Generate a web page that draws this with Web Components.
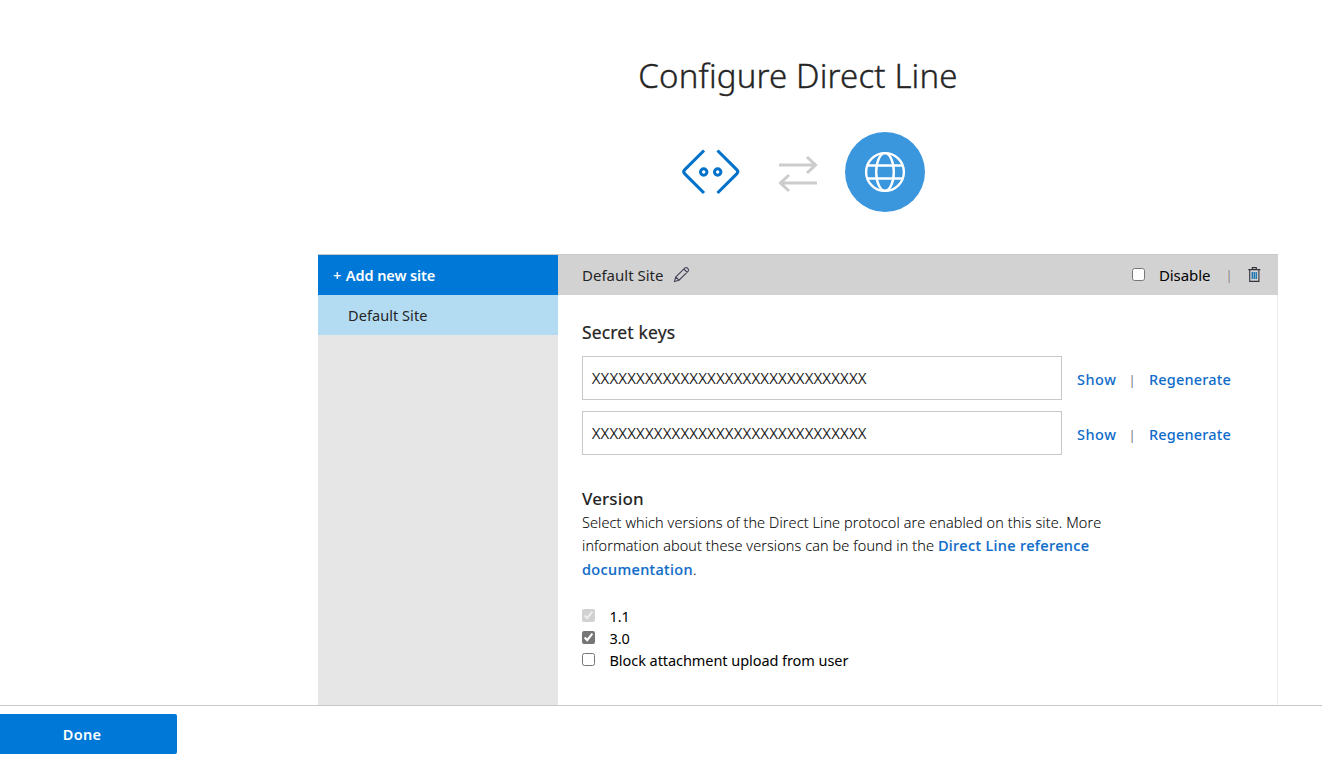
<!DOCTYPE html>
<html lang="en"><head><meta charset="utf-8"><title>Configure Direct Line</title>
<style>html,body{margin:0;height:100%;overflow:hidden;background:#fff}body{font-family:"Noto Sans","Open Sans",sans-serif;color:#252525}</style></head>
<body>
<channel-page>
  <page-header slot="header">Configure Direct Line</page-header>
  <site-list slot="content"><site-item slot="items">Default Site</site-item></site-list>
  <site-editor slot="content" name="Default Site">
    <secret-key value="XXXXXXXXXXXXXXXXXXXXXXXXXXXXXXX"></secret-key>
    <secret-key value="XXXXXXXXXXXXXXXXXXXXXXXXXXXXXXX"></secret-key>
    <version-section slot="versions">
      <check-option checked disabled>1.1</check-option>
      <check-option checked>3.0</check-option>
      <check-option>Block attachment upload from user</check-option>
    </version-section>
  </site-editor>
  <action-bar slot="footer">Done</action-bar>
</channel-page>
<script>
const define=(name,html,setup)=>customElements.define(name,class extends HTMLElement{
  constructor(){super();this.attachShadow({mode:'open'}).innerHTML=html;}
  connectedCallback(){if(setup)setup(this,this.shadowRoot);}
});

define('channel-page',`<style>
:host{display:flex;flex-direction:column;height:100vh;box-sizing:border-box}
.scroll{flex:1;overflow:hidden}
.panel{display:grid;grid-template-columns:240px 720px;width:960px;height:600px;margin-left:318px;border-top:1px solid #c8c8c8;box-sizing:border-box}
</style><div class="scroll"><slot name="header"></slot><div class="panel"><slot name="content"></slot></div></div><slot name="footer"></slot>`);

define('page-header',`<style>
:host{display:block;width:960px;height:254px;margin-left:318px;box-sizing:border-box;padding-top:51px}
h1{margin:0;text-align:center;font:300 33px/50px "Noto Sans",sans-serif;letter-spacing:.160px;color:#252525;-webkit-text-stroke:.35px #252525}
.icons{display:flex;align-items:center;margin:31px 0 0 364px;height:80px}
svg{display:block}.swap{margin:3px 27px 0 38px}
</style><h1><slot></slot></h1><div class="icons">
<svg width="58" height="46" viewBox="0 0 58 46" fill="none" stroke="#0072c9" stroke-width="3.1"><path d="M22 1.500 2.800 20.700q-2.100 2.100 0 4.200L22 44M35.500 1.500 54.700 20.700q2.100 2.100 0 4.200L35.500 44"/><circle cx="21.700" cy="23" r="3.200" stroke-width="3"/><circle cx="35.700" cy="23" r="3.200" stroke-width="3"/></svg>
<svg class="swap" width="40" height="38" viewBox="0 0 40 38" fill="none" stroke="#ccc" stroke-width="3"><path d="M1 10H37M29 2l8.500 8L29 18M39 28H3M11 20l-8.500 8 8.500 8"/></svg>
<svg width="80" height="80" viewBox="0 0 80 80" fill="none" stroke="#fff" stroke-width="2.400"><circle cx="40" cy="40" r="40" fill="#3a96dd" stroke="none"/><circle cx="40" cy="40" r="18.900"/><ellipse cx="40" cy="40" rx="8.800" ry="18.900"/><path d="M22.500 33.500h35M22.500 46.500h35"/></svg>
</div>`);

define('site-list',`<style>
:host{display:block;background:#e6e6e6}
button{display:block;width:240px;height:40px;padding:0 0 0 15px;border:0;background:#0078d7;color:#fff;text-align:left;font:600 14.500px/40px "Noto Sans",sans-serif;letter-spacing:-.100px}
span{font-weight:500;margin-right:1px}
</style><button><span>+</span> Add new site</button><slot name="items"></slot>`);

define('site-item',`<style>:host{display:block;height:40px;padding-left:30px;background:#b3dbf2;color:#252525;font:400 14.500px/40px "Noto Sans",sans-serif;letter-spacing:.060px}</style><slot></slot>`);

define('site-editor',`<style>
:host{display:block;box-sizing:border-box;font-family:"Noto Sans",sans-serif}
header{display:flex;align-items:center;height:40px;padding:0 16px 0 24px;background:#d2d2d2;font-size:15px;line-height:40px}
.name{width:82px;white-space:nowrap}
.pencil{margin:0 auto 0 9px}
input{width:13px;height:13px;margin:0 14px 2px 0}
.disable{width:51px;letter-spacing:-.1px;color:#000;white-space:nowrap}
.bar{width:4px;margin:0 17px 0 17px;font-size:13px;color:#8d8888;display:flex;justify-content:center}
svg{display:block}
.body{padding:25px 0 0 24px;height:600px;box-sizing:border-box;border-right:1px solid #ececec}
h2{margin:0 0 12px;font-size:17.500px;font-weight:400;line-height:24px;letter-spacing:.150px;-webkit-text-stroke:.2px #252525}
.keys{display:grid;gap:11px;margin-bottom:32px}
</style><header><span class="name"></span>
<svg class="pencil" width="18" height="18" viewBox="0 0 18 18" fill="none" stroke="#44445a" stroke-width="1.100"><path d="m1.500 15.500 1.200-4.500 9-8.800q1.100-1.100 2.200-.400l1.300 1.200q1 1.100 0 2.200l-9.200 9zM2.700 11l3.300 3.200M10.800 3l3.600 3.500"/></svg>
<input type="checkbox" aria-label="Disable"><span class="disable">Disable</span><span class="bar">|</span>
<svg width="14" height="18" viewBox="0 0 14 18" fill="none" stroke="#34343f" stroke-width="1.100"><path d="M.300 3.600h12M4.300 3.500V1.600h4v1.900M1.700 3.600v11.800h9.200V3.600"/><path d="M4.300 6v7M6.300 6v7M8.300 6v7" stroke="#277bb5" stroke-width="1.500"/></svg>
</header><div class="body"><h2>Secret keys</h2><div class="keys"><slot></slot></div><slot name="versions"></slot></div>`,(el,root)=>{root.querySelector('.name').textContent=el.getAttribute('name');});

define('secret-key',`<style>
:host{display:flex;align-items:center;height:44px;font:500 14.500px/20px "Noto Sans",sans-serif}
.value{width:480px;height:44px;box-sizing:border-box;border:1px solid #c8c8c8;padding-left:9px;font:300 15px/43px "Noto Sans",sans-serif;color:#000;letter-spacing:.650px;-webkit-text-stroke:.2px #000}
a{color:#0f6cc9;white-space:nowrap;margin-top:1px}
.show{margin-left:15px;width:39px;letter-spacing:.500px}.regen{letter-spacing:.180px}
.bar{margin:3px 15px 0 14px;width:4px;font-size:13px;font-weight:400;color:#77777f;display:flex;justify-content:center}
</style><div class="value"></div><a class="show">Show</a><span class="bar">|</span><a class="regen">Regenerate</a>`,(el,root)=>{root.querySelector('.value').textContent=el.getAttribute('value');});

define('version-section',`<style>
:host{display:block}
h2{margin:0;font:500 17px/24px "Noto Sans",sans-serif;letter-spacing:.100px}
p{margin:0;width:540px;height:70px;font:300 14.500px/23.400px "Open Sans",sans-serif;letter-spacing:.113px;color:#000;-webkit-text-stroke:.12px #000}
a{color:#0f6cc9;font-family:"Noto Sans",sans-serif;font-weight:500;letter-spacing:.340px;-webkit-text-stroke:.15px #0f6cc9}
.options{margin-top:24px}
</style><h2>Version</h2><p>Select which versions of the Direct Line protocol are enabled on this site. More<br>information about these versions can be found in the <a>Direct Line reference<br>documentation</a>.</p><div class="options"><slot></slot></div>`);

define('check-option',`<style>
:host{display:block}
label{display:flex;align-items:center;height:22px;font:400 14.500px/22px "Noto Sans",sans-serif;letter-spacing:-.060px;color:#000}
input{width:13px;height:13px;margin:0 14.500px 1px 0;accent-color:#767676}
</style><label><input type="checkbox"><slot></slot></label>`,(el,root)=>{const box=root.querySelector('input');box.checked=el.hasAttribute('checked');box.disabled=el.hasAttribute('disabled');});

define('action-bar',`<style>
:host{display:block;height:54px;box-sizing:border-box;border-top:1px solid #c8c8c8;padding-top:8px;background:#fff}
button{display:block;width:177px;height:40px;padding:0 13px 0 0;border:0;border-radius:0 2px 2px 0;background:#0078d7;color:#fff;font:600 14.500px/40px "Noto Sans",sans-serif;letter-spacing:.250px}
</style><button><slot></slot></button>`);
</script></body></html>
